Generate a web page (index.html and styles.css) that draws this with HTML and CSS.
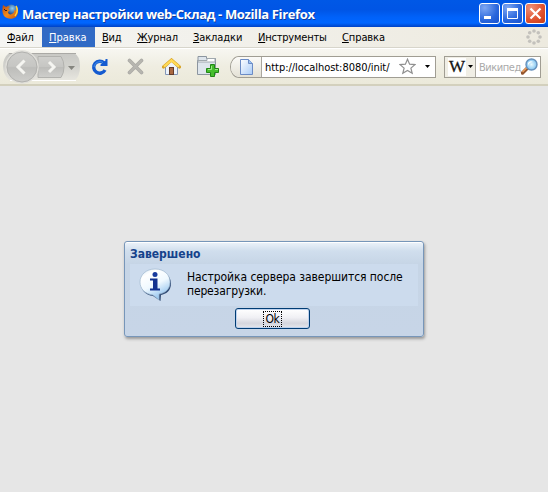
FILE: index.html
```html
<!DOCTYPE html>
<html lang="ru">
<head>
<meta charset="utf-8">
<title>Мастер настройки web-Склад - Mozilla Firefox</title>
<link rel="stylesheet" href="styles.css">
</head>
<body>
<header class="titlebar">
  <svg class="logo" width="17" height="17" viewBox="0 0 17 17">
    <defs><radialGradient id="globe" cx=".6" cy=".3"><stop offset="0" stop-color="#8fd0f4"/><stop offset="1" stop-color="#17448d"/></radialGradient>
    <linearGradient id="fox" x2="1" y2="1"><stop offset="0" stop-color="#b44a16"/><stop offset=".5" stop-color="#f38b1c"/><stop offset="1" stop-color="#c8560f"/></linearGradient></defs>
    <circle cx="9" cy="7" r="6.5" fill="url(#globe)"/>
    <path d="M1 1 4 3C5 2 7 2 8 3L6 5 8 6 6 8C6 10 8 11 10 10S13 7 12 5L14 7 14 2C17 5 16.5 10 14 13 10 16 5 15 2 12 0 9 0 5 1 1Z" fill="url(#fox)"/>
    <path d="M14 2Q17 7 13 12" fill="none" stroke="#ffd33b" stroke-width="1.500"/><path d="M2 5 4 7 5 6" stroke="#401c17" fill="none"/>
  </svg>
  <h1>Мастер настройки web-Склад - Mozilla Firefox</h1>
  <div class="window-buttons">
    <span class="wbtn"><svg width="19" height="19"><path d="M4 13.5h7" stroke="#fff" stroke-width="3"/></svg></span>
    <span class="wbtn"><svg width="19" height="19"><path d="M4 5.5h11M4.5 5v9.5h10V5" stroke="#fff" fill="none"/><path d="M4 5.5h11" stroke="#fff" stroke-width="3"/></svg></span>
    <span class="wbtn close"><svg width="19" height="19"><path d="m4.5 4.5 10 10m0-10-10 10" stroke="#fff" stroke-width="2.2"/></svg></span>
  </div>
</header>
<nav class="menubar">
  <span class="m-file"><u>Ф</u>айл</span><span class="m-edit"><u>П</u>равка</span><span class="m-view"><u>В</u>ид</span><span class="m-hist"><u>Ж</u>урнал</span><span class="m-book"><u>З</u>акладки</span><span class="m-tool"><u>И</u>нструменты</span><span class="m-help"><u>С</u>правка</span>
  <svg class="throbber" width="16" height="16" fill="#c3c1bc"><circle cx="8" cy="2" r="1.8"/><circle cx="12.3" cy="3.7" r="1.8"/><circle cx="14" cy="8" r="1.8"/><circle cx="12.3" cy="12.3" r="1.8"/><circle cx="8" cy="14" r="1.8"/><circle cx="3.7" cy="12.3" r="1.8"/><circle cx="2" cy="8" r="1.8"/><circle cx="3.7" cy="3.7" r="1.8"/></svg>
</nav>
<div class="toolbar">
  <svg class="history" width="79" height="34" viewBox="0 0 79 34">
    <defs><linearGradient id="grey" x2="0" y2="1"><stop offset="0" stop-color="#c8c8c4"/><stop offset=".5" stop-color="#d2d2cd"/><stop offset="1" stop-color="#e7e6df"/></linearGradient>
    <linearGradient id="disc" x2="0" y2="1"><stop offset="0" stop-color="#d0d0cd"/><stop offset=".48" stop-color="#c6c6c3"/><stop offset=".52" stop-color="#bdbdba"/><stop offset="1" stop-color="#cfcfcc"/></linearGradient></defs>
    <path d="M8 3H73Q79 6 79 16T74 30H8Q2 24 2 16T8 3Z" fill="url(#grey)"/>
    <path d="M8 3.5H75" stroke="#aaa9a5"/><path d="M9 30.5H75" stroke="#fff"/>
    <path d="M37 6.500H60Q63 11 63 17T60 27.500H37Z" fill="url(#disc)" stroke="#b2b2ae"/>
    <circle cx="21" cy="17" r="16" fill="url(#disc)" stroke="#e0dfda" stroke-width="1.500"/><circle cx="21" cy="17" r="15" fill="none" stroke="#b2b2af"/>
    <path d="m23.500 10.500-6.500 6.500 6.500 6.500" fill="none" stroke="#f5f5f1" stroke-width="3"/><path d="m48 12 5 5-5 5" fill="none" stroke="#f5f5f1" stroke-width="3"/>
    <path d="M67 16h7l-3.500 4Z" fill="#85857f"/>
  </svg>
  <svg class="reload" width="18" height="18"><path d="M14 12A6 6 0 1 1 13 5" fill="none" stroke="#155bd0" stroke-width="3.400"/><path d="M16.500 1V8H9.500V6.500L14.500 2.500V1Z" fill="#155bd0"/><path d="M3 9A6 6 0 0 1 12 4.500" stroke="#4390e9" fill="none"/></svg>
  <svg class="stop" width="17" height="17"><path d="m2.500 2.500 12 12m0-12-12 12" stroke="#aaa9a5" stroke-width="3.600" stroke-linecap="round"/><path d="m2.500 2.500 12 12m0-12-12 12" stroke="#b7b6b0" stroke-width="2" stroke-linecap="round"/></svg>
  <svg class="home" width="19" height="18"><path d="M3.500 9v7.500h12V9L9.500 3Z" fill="#edf3fb" stroke="#8396b8"/><rect x="7.500" y="9.500" width="4" height="7" fill="#aa6842" stroke="#633c2b"/><path d="m1.500 9 8-7 8 7" fill="none" stroke="#d9a52c" stroke-width="3.200" stroke-linecap="round"/><path d="m2 8.700 7.500-6.400 7.500 6.400" fill="none" stroke="#ffda55" stroke-width="2.200"/></svg>
  <svg class="newtab" width="23" height="21"><path d="M.5 18.500V4.500H1V.5H9.500V2.500H18.500V18.500Z" fill="#dee5ec" stroke="#8c959f"/><path d="M1 4.500H10V2.500H18V6H1Z" fill="#fff" stroke="#a0a8ae"/><path d="M13.500 8.500h4v4h4v4h-4v4h-4v-4h-4v-4h4Z" fill="#46be2d" stroke="#228616"/><path d="M14.500 10v3.500H11M18 13.500h3" fill="none" stroke="#9be986"/></svg>
  <div class="address"><div class="site"><svg width="14" height="17"><defs><linearGradient id="page" x2="1" y2="1"><stop stop-color="#fff"/><stop offset="1" stop-color="#a9cbf7"/></linearGradient></defs><path d="M.5.5H8.500L12.500 4.500V15.500H.5Z" fill="url(#page)" stroke="#6b8bc5"/><path d="M8.500.5V4.500H12.500" fill="#9cc2f1" stroke="#6b8bc5"/></svg></div>
    <span class="url">http://localhost:8080/init/</span>
    <svg class="star" width="17" height="17"><path d="m8.500 1.200 2.100 5 5.300.4-4 3.500 1.300 5.200-4.700-2.800-4.700 2.800 1.300-5.200-4-3.500 5.300-.4Z" fill="#fff" stroke="#8f8f8f" stroke-width="1.200"/></svg>
    <svg class="arrow" width="5" height="3"><path d="M0 0h5L2.500 3Z"/></svg>
  </div>
  <div class="search"><div class="engine"><span class="wiki">W</span><svg width="5" height="3"><path d="M0 0h5L2.500 3Z"/></svg></div><span class="hint">Википед</span>
    <svg class="lens" width="17" height="17"><defs><radialGradient id="glass"><stop stop-color="#e9faff"/><stop offset="1" stop-color="#7fc3f1"/></radialGradient></defs><path d="m1.500 15 5-5" stroke="#92542d" stroke-width="3.500" stroke-linecap="round"/><path d="m1.500 14 5-5" stroke="#efa05b" stroke-width="1.500"/><circle cx="10.500" cy="6.500" r="5.500" fill="url(#glass)" stroke="#6791bc" stroke-width="1.400"/><path d="M7 5q2-3 5-1Q8 4 7 8" fill="#fff"/></svg>
  </div>
</div>
<main>
  <section class="dialog">
    <h2>Завершено</h2>
    <div class="message">
      <svg width="34" height="34" viewBox="0 0 34 34"><defs><linearGradient id="bubble" x2=".5" y2="1"><stop stop-color="#dcebf6"/><stop offset=".25" stop-color="#fff"/><stop offset=".6" stop-color="#f0f9ff"/><stop offset="1" stop-color="#94c4ef"/></linearGradient></defs>
      <path d="M17 3C26 3 32 8 32 15.500S27 26 22 27L21.500 33 14 28C6 27 2 22 2 15.500S8 3 17 3Z" fill="#304b75"/><path d="M16 1C25 1 31 6.500 31 14S26 25 20 26L20 32 14 27C6 26 1 21 1 14S7 1 16 1Z" fill="url(#bubble)" stroke="#9fb7ce" stroke-width=".7"/>
      <circle cx="16" cy="6.500" r="2.500" fill="#183b9e"/><path d="M11 10.500H18.500V20.500H21V22.500H11V20.500H14V12.500H11Z" fill="#12318f"/></svg>
      <p><span class="line1">Настройка сервера завершится после</span><br><span class="line2">перезагрузки.</span></p>
    </div>
    <button class="ok"><span>Ok</span></button>
  </section>
</main>
</body>
</html>
```
FILE: styles.css
```css
* { box-sizing: border-box; }
body { margin: 0; width: 548px; height: 492px; overflow: hidden; display: flex; flex-direction: column; background: #e6e6e6; color: #000; font: 11px "DejaVu Sans Condensed", "DejaVu Sans", sans-serif; }
svg { display: block; flex: none; }
.titlebar { height: 27px; flex: none; display: flex; align-items: flex-start; padding: 4px 2px 0; background: linear-gradient(#0058e6 0, #0055e5 35%, #0062fa 65%, #0066ff 85%, #0042c5 100%); }
h1 { margin: 1px 0 0 3px; font: bold 13px/18px "Open Sans", sans-serif; letter-spacing: -.36px; color: #fff; text-shadow: 1px 1px #123c9a; white-space: nowrap; }
.window-buttons { display: flex; gap: 2px; margin: -1px 0 0 auto; }
.wbtn { width: 21px; height: 21px; border: 1px solid #fff; border-radius: 3px; background: radial-gradient(circle at 25% 20%, #7ea7f3, #2966dc 60%, #1852ce); }
.close { background: radial-gradient(circle at 25% 20%, #ee9078, #df512e 60%, #c53d17); }
.menubar { height: 21px; flex: none; display: flex; background: linear-gradient(90deg, #f5f5f3, #edeadf); border-bottom: 1px solid #d7d5cb; line-height: 21px; white-space: nowrap; }
.menubar span { flex: none; padding-left: 7px; }
.m-file { width: 42px; letter-spacing: -.2px; }
.m-edit { width: 53px; height: 20px; background: #316ac5; color: #fff; letter-spacing: 0; }
.m-view { width: 35px; letter-spacing: -.3px; }
.m-hist { width: 56px; letter-spacing: -.1px; }
.m-book { width: 65px; letter-spacing: -.1px; }
.m-tool { width: 84px; letter-spacing: -.2px; }
.m-help { width: 60px; letter-spacing: -.1px; }
.menubar u { text-underline-offset: 1px; }
.throbber { margin: 2px 6px 0 auto; }
.toolbar { height: 38px; flex: none; display: flex; align-items: center; background: linear-gradient(#f7f6f1, #efede1 50%, #ebe9da); border-top: 1px solid #fff; border-bottom: 2px solid #d3d0bd; }
.history { margin: 0 0 0 1px; }
.reload { margin-left: 11px; }
.stop { margin-left: 18px; }
.home { margin-left: 18px; }
.newtab { margin: 0 10px 0 16px; }
.address { width: 206px; height: 22px; display: flex; align-items: center; background: #fff; border: 1px solid #a09d93; border-radius: 9px 0 0 9px / 11px 0 0 11px; overflow: hidden; flex: none; }
.site { width: 31px; height: 20px; padding: 2px 0 0 9px; border-right: 1px solid #aaa79f; background: linear-gradient(#fbfaf7, #e4e1d5); }
.url { margin: 2px 0 0 3px; width: 134px; letter-spacing: -.04px; }
.arrow { margin-left: 9px; }
.search { margin-left: 8px; width: 97px; height: 22px; display: flex; align-items: center; background: #fff; border: 1px solid #a09d93; flex: none; }
.engine { width: 31px; height: 20px; display: flex; align-items: center; gap: 2px; border-right: 1px solid #aaa79f; background: #f0eee5; }
.wiki { width: 18px; margin-left: 3px; font: 17px/18px "Liberation Serif", serif; color: #151515; background: #fff; padding-left: 1px; -webkit-text-stroke: .3px #151515; }
.hint { margin: 2px 0 0 3px; width: 41px; color: #aaa; letter-spacing: -.45px; white-space: nowrap; }
.lens { margin-left: 1px; }
main { flex: 1; padding: 155px 0 0 124px; }
.dialog { width: 300px; height: 96px; padding: 0 5px; display: flex; flex-direction: column; background: linear-gradient(#edf3fa 0, #d0deed 9px, #c6d5e6 22px, #c7d5e7); border: 1px solid #7796b9; border-radius: 3px; box-shadow: inset 0 1px #fff, 1px 2px 3px #999; }
h2 { margin: 4px 0 0; height: 18px; color: #15428b; font: bold 12px/17px "DejaVu Sans Condensed", sans-serif; }
.message { height: 42px; background: #ccdbed; display: flex; padding: 4px 0 0 9px; }
.message p { margin: 2px 0 0 14px; font-size: 12px; line-height: 14px; white-space: nowrap; letter-spacing: -.06px; }
.line2 { letter-spacing: -.15px; }
.ok { width: 75px; height: 21px; margin: 2px auto 0 105px; padding: 0; display: grid; place-items: center; color: #000; background: linear-gradient(#fff, #f0f0f4 45%, #d5d6de 75%, #e5e7ec); border: 1px solid #003c74; border-radius: 3px; box-shadow: inset 0 0 0 1px #bed2ee; font: 12px/15px "DejaVu Sans Condensed", sans-serif; }
.ok span { border: 1px dotted #000; width: 19px; height: 16px; letter-spacing: -.4px; }
```
